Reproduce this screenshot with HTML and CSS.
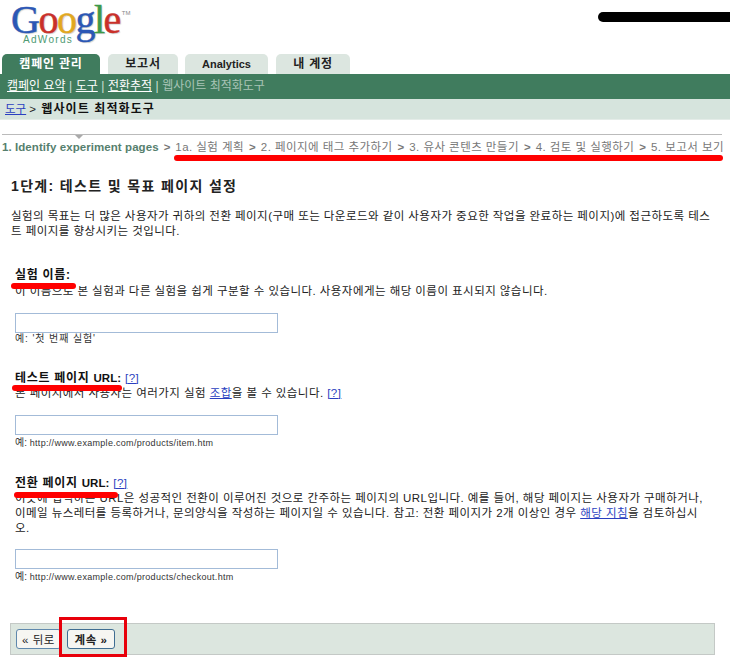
FILE: index.html
```html
<!DOCTYPE html>
<html lang="ko">
<head>
<meta charset="utf-8">
<title>웹사이트 최적화도구</title>
<link rel="stylesheet" href="styles.css">
</head>
<body>
<header class="top">
  <div class="logo">
    <div class="wordmark"><span class="b">G</span><span class="r">o</span><span class="y">o</span><span class="b">g</span><span class="g">l</span><span class="r">e</span><sup>TM</sup></div>
    <div class="adwords">AdWords</div>
  </div>
</header>
<nav class="tabs">
  <span class="tab active">캠페인 관리</span>
  <span class="tab t2">보고서</span>
  <span class="tab t3">Analytics</span>
  <span class="tab t4">내 계정</span>
</nav>
<div class="subnav"><a>캠페인 요약</a><i>|</i><a>도구</a><i>|</i><a>전환추적</a><i>|</i><span>웹사이트 최적화도구</span></div>
<div class="crumb"><a>도구</a> &gt; <b>웹사이트 최적화도구</b></div>
<div class="steps">
  <div class="marker"></div>
  <b>1. Identify experiment pages</b><em>&gt;</em><span>1a. 실험 계획</span><em>&gt;</em><span>2. 페이지에 태그 추가하기</span><em>&gt;</em><span>3. 유사 콘텐츠 만들기</span><em>&gt;</em><span>4. 검토 및 실행하기</span><em>&gt;</em><span>5. 보고서 보기</span>
</div>
<main class="content">
  <h1>1단계: 테스트 및 목표 페이지 설정</h1>
  <p class="intro">실험의 목표는 더 많은 사용자가 귀하의 전환 페이지(구매 또는 다운로드와 같이 사용자가 중요한 작업을 완료하는 페이지)에 접근하도록 테스트 페이지를 향상시키는 것입니다.</p>
  <section class="field f1">
    <h2>실험 이름:</h2>
    <p>이 이름으로 본 실험과 다른 실험을 쉽게 구분할 수 있습니다. 사용자에게는 해당 이름이 표시되지 않습니다.</p>
    <input type="text" class="box">
    <div class="hint">예: '첫 번째 실험'</div>
  </section>
  <section class="field f2">
    <h2>테스트 페이지 <span class="u">URL:</span> <a class="q">[?]</a></h2>
    <p>본 페이지에서 사용자는 여러가지 실험 <a>조합</a>을 볼 수 있습니다. <a>[?]</a></p>
    <input type="text" class="box">
    <div class="hint">예: <span class="url">http://www.example.com/products/item.htm</span></div>
  </section>
  <section class="field f3">
    <h2>전환 페이지 <span class="u">URL:</span> <a class="q">[?]</a></h2>
    <p>이곳에 입력하는 URL은 성공적인 전환이 이루어진 것으로 간주하는 페이지의 URL입니다. 예를 들어, 해당 페이지는 사용자가 구매하거나, 이메일 뉴스레터를 등록하거나, 문의양식을 작성하는 페이지일 수 있습니다. 참고: 전환 페이지가 2개 이상인 경우 <a>해당 지침</a>을 검토하십시오.</p>
    <input type="text" class="box">
    <div class="hint">예: <span class="url">http://www.example.com/products/checkout.htm</span></div>
  </section>
</main>
<footer class="actions">
  <button class="btn">« 뒤로</button>
  <button class="btn strong">계속 »</button>
</footer>
<div class="red redact"></div>
<div class="red r-steps"></div>
<div class="red r-name"></div>
<div class="red r-test"></div>
<div class="red r-conv"></div>
<div class="red-box"></div>
</body>
</html>
```
FILE: styles.css
```css
html, body { margin: 0; padding: 0; }
body {
  width: 730px; height: 662px; overflow: hidden; position: relative; background: #fff;
  font-family: "Liberation Sans", "Noto Sans CJK KR", sans-serif; font-size: 11.5px; color: #222;
}
a { color: #2a3fc0; text-decoration: underline; }
.top { height: 54px; padding-left: 11px; box-sizing: border-box; }
.logo { width: 120px; height: 54px; position: relative; }
.wordmark {
  font-family: "Liberation Serif", serif; font-size: 40px; line-height: 40px; letter-spacing: -1.5px; height: 40px;
  -webkit-text-stroke: .5px currentColor; text-shadow: 1px 1px 1px rgba(0,0,0,.2);
}
.wordmark sup { font-family: "Liberation Sans", sans-serif; font-size: 6px; letter-spacing: 0; color: #888; vertical-align: 18px; line-height: 0; margin-left: 2px; -webkit-text-stroke: 0; text-shadow: none; }
.b { color: #2b57b5; } .r { color: #c9302a; } .y { color: #e2a81f; } .g { color: #3c9a48; }
.adwords { position: absolute; left: 12px; top: 34px; font-size: 10px; line-height: 11px; letter-spacing: 1.3px; color: #4f9a72; }
.tabs { display: flex; height: 20px; padding-left: 2px; align-items: flex-end; }
.tab {
  height: 20px; line-height: 20px; box-sizing: border-box; text-align: center; background: #dce6e0; color: #222;
  font-size: 12px; letter-spacing: .8px; font-weight: 700; border-radius: 5px 5px 0 0; margin-right: 7px; width: 70px;
}
.tab.active { background: #407c5e; color: #fff; width: 98px; margin-right: 8px; }
.t3 { width: 83px; font-size: 11px; letter-spacing: 0; margin-right: 8px; } .t4 { width: 74px; }
.subnav { height: 25px; line-height: 24px; background: #407c5e; padding-left: 7px; color: #a9c4b6; font-size: 12px; white-space: nowrap; }
.subnav a { color: #fff; }
.subnav i { font-style: normal; margin: 0 3.5px; color: #cfe0d6; }
.crumb { height: 21px; line-height: 20px; background: #d6e4dd; padding-left: 5px; font-size: 11.5px; box-sizing: border-box; border-bottom: 1px solid #e4ece8; }
.crumb b { color: #111; font-size: 12px; letter-spacing: 1.1px; margin-left: 2px; }
.steps {
  position: relative; margin: 14px 8px 0 2px; border-top: 1px solid #bbb; height: 28px; line-height: 24px;
  font-size: 11.5px; color: #777; white-space: nowrap; display: flex;
}
.steps b { color: #567f6e; font-weight: 700; letter-spacing: .07px; }
.steps span { letter-spacing: .45px; }
.steps em { font-style: normal; font-weight: 700; margin: 0 5px; }
.marker { position: absolute; left: 73px; top: 0; border: 4px solid transparent; border-top: 4px solid #aaa; border-bottom: 0; }
.content { padding: 0 15px 0 11px; letter-spacing: .45px; }
h1 { margin: 15px 0 0; font-size: 14px; line-height: 16px; font-weight: 700; color: #222; letter-spacing: 1.35px; }
.intro { margin: 15px 0 0; line-height: 15px; }
.field { padding-left: 4px; }
.field h2 { margin: 0; font-size: 12px; line-height: 15px; font-weight: 700; color: #111; letter-spacing: .7px; }
.field h2 .u { font-size: 11.5px; letter-spacing: 0; }
.field h2 .q { font-weight: 400; font-size: 11.5px; letter-spacing: .4px; }
.field p { margin: 0; line-height: 15px; }
.f1 { margin-top: 29px; } .f2 { margin-top: 26px; } .f3 { margin-top: 26px; }
.f1 p { margin-top: 1px; }
.f2 p { margin-top: 0; }
.f3 p { padding-right: 5px; }
.box { display: block; width: 263px; height: 20px; box-sizing: border-box; margin: 14px 0 0; border: 1px solid #a3bbd8; background: #fff; padding: 0; }
.f2 .box { margin-top: 14px; } .f3 .box { margin-top: 13px; }
.hint { font-size: 10px; line-height: 13px; margin-top: -1px; color: #333; letter-spacing: .9px; }
.url { font-size: 9px; letter-spacing: .3px; }
.f2 .hint, .f3 .hint { margin-top: 1px; letter-spacing: 0; }
.actions {
  position: absolute; left: 10px; top: 623px; width: 705px; height: 32px; box-sizing: border-box;
  background: #dce6df; border: 1px solid #c4c9c6; display: flex; align-items: center; gap: 6px; padding-left: 5px;
}
.btn {
  height: 20px; padding: 0 3px; font: 11.5px "Liberation Sans", "Noto Sans CJK KR", sans-serif; color: #222;
  background: #f6f6f2; border: 1px solid #5f88ad; border-radius: 3px; width: 45px; letter-spacing: .5px;
}
.btn.strong { font-weight: 700; width: 48px; border-color: #3f6d92; }
.red { position: absolute; background: #f00; height: 6px; border-radius: 3px; }
.redact { background: #000; left: 598px; top: 12px; width: 132px; height: 10px; border-radius: 5px 0 0 5px; }
.r-steps { left: 174px; top: 155px; width: 549px; }
.r-name { left: 11px; top: 283px; width: 65px; }
.r-test { left: 12px; top: 385px; width: 110px; }
.r-conv { left: 14px; top: 492px; width: 104px; }
.red-box { position: absolute; left: 59px; top: 617px; width: 68px; height: 40px; box-sizing: border-box; border: 3px solid #e8000b; }
```
